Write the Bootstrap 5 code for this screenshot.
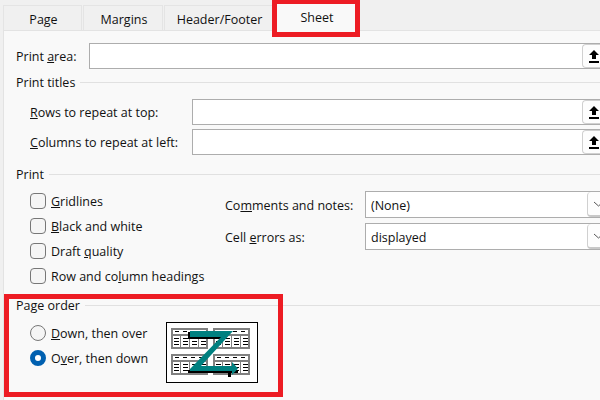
<!DOCTYPE html>
<html lang="en">
<head>
  <meta charset="UTF-8">
  <meta name="viewport" content="width=device-width, initial-scale=1">
  <title>Page Setup - Sheet</title>
  <link href="https://cdn.jsdelivr.net/npm/bootstrap@5.3.0/dist/css/bootstrap.min.css" rel="stylesheet">
  <style>
    html, body { height: 100%; }
    body { width: 600px; height: 400px; overflow: hidden; background: #f0f0f0; color: #111; position: relative;
      font: 12.5px/18px "Open Sans", "Noto Sans", sans-serif; }

    /* tabs */
    .tab-strip { height: 30px; padding-left: 3px; gap: 1px; border: 0; }
    .tab-strip .nav-link { height: 25px; margin: 5px 0 0; padding: 5px 0 0 2px; text-align: center; color: #111;
      background: #f0f0f0; border: 1px solid #e4e4e4; border-bottom: 0; border-radius: 0; }
    .tab-strip .nav-link.active { height: 28px; margin-top: 3px; padding-top: 5px; background: #f9f9f9; color: #111;
      border-color: #e4e4e4; }
    .tab-page { width: 79px; } .tab-margins { width: 80px; } .tab-header { width: 109px; } .tab-sheet { width: 84px; }

    /* panel */
    .sheet-panel { height: 370px; margin-left: 3px; padding: 12px 0 0 12px; background: #f9f9f9;
      border-top: 1px solid #e3e3e3; border-left: 1px solid #e3e3e3; }
    .sheet-panel label { padding-top: 2px; }
    .ref-box { height: 26px; background: #fff; border: 1px solid #adadad; border-right: 0; }
    .ref-box input { border: 0; outline: 0; background: transparent; min-width: 0; }
    .ref-btn { width: 20px; margin: 0 -2px 0 0; height: 24px; padding: 0 0 0 6px; text-align: left; background: #fdfdfd;
      border: 1px solid #d0d0d0; border-right: 0; border-radius: 4px 0 0 4px; line-height: 0; }
    .area-row { margin-bottom: 4px; }
    .area-label { width: 73px; }
    .titles-row { padding-left: 14px; height: 26px; margin-bottom: 4px; }
    .titles-label { width: 162px; }
    .group-head { height: 18px; gap: 5px; }
    .group-head span { padding-top: 2px; }
    .group-line { height: 1px; background: #e1e1e1; }
    .group-titles { margin-bottom: 8px; }
    .group-print { margin-top: 10px; margin-bottom: 5px; }

    /* print options */
    .opts-col { width: 209px; padding-left: 14px; }
    .opt-row { height: 25px; margin: 0; padding: 0; gap: 5px; min-height: 0; }
    .sheet-panel .opt-row label { padding-top: 3px; }
    .opt-row .form-check-input { width: 16px; height: 16px; margin: 0; float: none; flex: none; background-color: #f5f5f5;
      border: 1px solid #777; }
    .opt-row input[type=checkbox] { border-radius: 4px; }
    .opt-row input[type=radio]:checked { background-color: #fff; background-image: none; border: 5px solid #0060b0; }
    .print-body { height: 100px; }
    .combo-list { padding-top: 3px; }
    .combo-row { height: 27px; margin-bottom: 5px; }
    .combo-label { width: 140px; }
    .combo-sel { width: 240px; height: 27px; padding: 2px 0 0 5px; font: inherit; color: #111; background-color: #fff;
      background-image: none; border: 1px solid #adadad; border-radius: 0; appearance: none; }
    .combo-wrap { width: 235px; overflow: hidden; }
    .combo-arrow { right: 0; top: 1px; width: 13px; height: 25px; padding-left: 5px; overflow: hidden; background: #fdfdfd;
      border-left: 1px solid #d0d0d0; border-bottom: 2px solid #c8c8c8; border-radius: 4px 0 0 4px; pointer-events: none; }
    .combo-arrow svg { flex: none; }

    /* page order */
    .order-head { margin-top: 8px; margin-bottom: 6px; }
    .order-opts { width: 150px; padding-left: 14px; }
    .order-pic { width: 92px; height: 61px; margin-top: 2px; }

    /* red marks drawn over the dialog */
    .red-mark { position: absolute; border: 5px solid #ed1c24; pointer-events: none; }
    .mark-sheet { left: 272px; top: -1px; width: 88px; height: 38px; }
    .mark-order { left: 4px; top: 294px; width: 279px; height: 103px; }
  </style>
</head>
<body>

  <ul class="nav tab-strip d-flex flex-nowrap">
    <li class="nav-item"><a class="nav-link tab-page" href="#">Page</a></li>
    <li class="nav-item"><a class="nav-link tab-margins" href="#">Margins</a></li>
    <li class="nav-item"><a class="nav-link tab-header" href="#">Header/Footer</a></li>
    <li class="nav-item"><a class="nav-link tab-sheet active" href="#">Sheet</a></li>
  </ul>

  <div class="sheet-panel">

    <div class="d-flex align-items-center area-row">
      <label class="area-label">Print <u>a</u>rea:</label>
      <div class="ref-box d-flex flex-grow-1">
        <input type="text" class="flex-grow-1">
        <button type="button" class="ref-btn"><svg width="10" height="13" viewBox="0 0 10 13"><path d="M5 0 10 5H7V9H3V5H0Z"/><rect y="11" width="10" height="2"/></svg></button>
      </div>
    </div>

    <div class="group-head group-titles d-flex align-items-center">
      <span>Print titles</span><div class="group-line flex-grow-1"></div>
    </div>

    <div class="d-flex align-items-center titles-row">
      <label class="titles-label"><u>R</u>ows to repeat at top:</label>
      <div class="ref-box d-flex flex-grow-1">
        <input type="text" class="flex-grow-1">
        <button type="button" class="ref-btn"><svg width="10" height="13" viewBox="0 0 10 13"><path d="M5 0 10 5H7V9H3V5H0Z"/><rect y="11" width="10" height="2"/></svg></button>
      </div>
    </div>
    <div class="d-flex align-items-center titles-row">
      <label class="titles-label"><u>C</u>olumns to repeat at left:</label>
      <div class="ref-box d-flex flex-grow-1">
        <input type="text" class="flex-grow-1">
        <button type="button" class="ref-btn"><svg width="10" height="13" viewBox="0 0 10 13"><path d="M5 0 10 5H7V9H3V5H0Z"/><rect y="11" width="10" height="2"/></svg></button>
      </div>
    </div>

    <div class="group-head group-print d-flex align-items-center">
      <span>Print</span><div class="group-line flex-grow-1"></div>
    </div>

    <div class="d-flex print-body">
      <div class="opts-col flex-shrink-0">
        <div class="form-check opt-row d-flex align-items-center"><input class="form-check-input" type="checkbox"><label><u>G</u>ridlines</label></div>
        <div class="form-check opt-row d-flex align-items-center"><input class="form-check-input" type="checkbox"><label><u>B</u>lack and white</label></div>
        <div class="form-check opt-row d-flex align-items-center"><input class="form-check-input" type="checkbox"><label>Draft <u>q</u>uality</label></div>
        <div class="form-check opt-row d-flex align-items-center"><input class="form-check-input" type="checkbox"><label>Row and co<u>l</u>umn headings</label></div>
      </div>
      <div class="combo-list flex-grow-1">
        <div class="d-flex align-items-center combo-row">
          <label class="combo-label">Co<u>m</u>ments and notes:</label>
          <div class="combo-wrap position-relative">
            <select class="form-select combo-sel"><option>(None)</option></select>
            <div class="combo-arrow position-absolute d-flex align-items-center"><svg width="11" height="6" viewBox="0 0 11 6"><path d="M1 1 5.500 5 10 1" fill="none" stroke="#555"/></svg></div>
          </div>
        </div>
        <div class="d-flex align-items-center combo-row">
          <label class="combo-label">Cell <u>e</u>rrors as:</label>
          <div class="combo-wrap position-relative">
            <select class="form-select combo-sel"><option>displayed</option></select>
            <div class="combo-arrow position-absolute d-flex align-items-center"><svg width="11" height="6" viewBox="0 0 11 6"><path d="M1 1 5.500 5 10 1" fill="none" stroke="#555"/></svg></div>
          </div>
        </div>
      </div>
    </div>

    <div class="group-head order-head d-flex align-items-center">
      <span>Page order</span><div class="group-line flex-grow-1"></div>
    </div>

    <div class="d-flex">
      <div class="order-opts flex-shrink-0">
        <div class="form-check opt-row d-flex align-items-center"><input class="form-check-input" type="radio" name="ord"><label><u>D</u>own, then over</label></div>
        <div class="form-check opt-row d-flex align-items-center"><input class="form-check-input" type="radio" name="ord" checked><label>O<u>v</u>er, then down</label></div>
      </div>
      <svg class="order-pic" viewBox="0 0 92 61" shape-rendering="crispEdges">
        <defs>
          <g id="mini-sheet">
            <rect x="1" y="1" width="35" height="19" fill="#fff" stroke="#808080" stroke-width="2"/>
            <rect x="0" y="6" width="37" height="2" fill="#808080"/>
            <path d="M4 3.500H8M12 3.500H16M20 3.500H24M28 3.500H32" stroke="#000"/>
            <path d="M9.500 8V20M18.500 8V20M27.500 8V20" stroke="#808080"/>
            <path d="M3 10.500H8M12 10.500H17M21 10.500H26M30 10.500H35M3 13.500H8M12 13.500H17M21 13.500H26M30 13.500H35M3 16.500H8M12 16.500H17M21 16.500H26M30 16.500H35" stroke="#000"/>
          </g>
        </defs>
        <rect x="0.500" y="0.500" width="91" height="60" fill="#fff" stroke="#000"/>
        <use href="#mini-sheet" x="5" y="6"/>
        <use href="#mini-sheet" x="47" y="6"/>
        <use href="#mini-sheet" x="5" y="32"/>
        <use href="#mini-sheet" x="47" y="32"/>
        <path d="M22 10H26V15H56V17H22ZM22 48H66V49H22ZM22 49H72V51H65V55H62V51H22Z" fill="#000"/>
        <path shape-rendering="auto" d="M24 9H67L35 44H66V40L72 46.500 66 53V49H24V47L55 15H24Z" fill="#008080"/>
      </svg>
    </div>
  </div>

  <div class="red-mark mark-sheet"></div>
  <div class="red-mark mark-order"></div>

</body>
</html>
